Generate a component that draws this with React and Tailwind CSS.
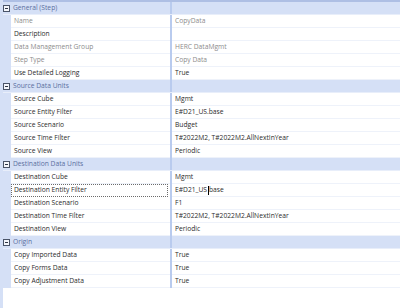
const sections = [
  {
    title: "General (Step)",
    rows: [
      { label: "Name", value: "CopyData", muted: true },
      { label: "Description", value: "" },
      { label: "Data Management Group", value: "HERC DataMgmt", muted: true },
      { label: "Step Type", value: "Copy Data", muted: true },
      { label: "Use Detailed Logging", value: "True" },
    ],
  },
  {
    title: "Source Data Units",
    rows: [
      { label: "Source Cube", value: "Mgmt" },
      { label: "Source Entity Filter", value: "E#D21_US.base" },
      { label: "Source Scenario", value: "Budget" },
      { label: "Source Time Filter", value: "T#2022M2, T#2022M2.AllNextInYear" },
      { label: "Source View", value: "Periodic" },
    ],
  },
  {
    title: "Destination Data Units",
    rows: [
      { label: "Destination Cube", value: "Mgmt" },
      { label: "Destination Entity Filter", value: "E#D21_US.base", focused: true },
      { label: "Destination Scenario", value: "F1" },
      { label: "Destination Time Filter", value: "T#2022M2, T#2022M2.AllNextInYear" },
      { label: "Destination View", value: "Periodic" },
    ],
  },
  {
    title: "Origin",
    rows: [
      { label: "Copy Imported Data", value: "True" },
      { label: "Copy Forms Data", value: "True" },
      { label: "Copy Adjustment Data", value: "True" },
    ],
  },
];

function CollapseIcon() {
  return (
    <svg width="7" height="7" viewBox="0 0 7 7" className="shrink-0">
      <rect x="0.5" y="0.5" width="6" height="6" fill="#f4f6fb" stroke="#4a5468" strokeWidth="1" />
      <rect x="2" y="3" width="3" height="1" fill="#2f3645" />
    </svg>
  );
}

function SectionHeader({ title }) {
  return (
    <div className="flex h-[13px] bg-[#d5e0f6] border-b border-[#e8eefa]">
      <div className="flex w-[8px] items-center justify-start">
        <CollapseIcon />
      </div>
      <div className="flex w-[159px] items-center pl-[2px] text-[#5a6fa0]">{title}</div>
      <div className="w-[2px] bg-[#b9cbee]" />
      <div className="flex-1" />
    </div>
  );
}

function PropertyRow({ row }) {
  const valueText = row.focused ? (
    <span className="flex items-center">
      E#D21_US<span className="mx-[0.5px] inline-block h-[9px] w-px bg-black" />base
    </span>
  ) : (
    row.value
  );

  return (
    <div className="flex h-[13px]">
      <div className="w-[8px] bg-[#d5e0f6]" />
      <div
        className={
          row.focused
            ? "flex w-[157px] items-center border border-dotted border-[#6b6b6b] pl-[2px] mr-[2px]"
            : "flex w-[159px] items-center border-b border-[#eef2fa] pl-[3px]"
        }
      >
        <span className={row.muted ? "text-[#8c8c8c]" : "text-[#2b2b2b]"}>{row.label}</span>
      </div>
      <div className="w-[2px] bg-[#b9cbee]" />
      <div
        className={
          "flex flex-1 items-center border-b border-[#eef2fa] pl-[3px] " +
          (row.muted ? "text-[#8c8c8c]" : "text-[#2b2b2b]")
        }
      >
        {valueText}
      </div>
    </div>
  );
}

export default function App() {
  return (
    <div
      className="h-[308px] w-[400px] overflow-hidden bg-white text-[6.7px] leading-none"
      style={{ fontFamily: '"Open Sans", "Liberation Sans", sans-serif' }}
    >
      <div className="flex h-full flex-col border-l-[3px] border-[#d5e0f6]">
        <div className="h-[2px] bg-[#aebfe4]" />
        {sections.map((section) => (
          <div key={section.title}>
            <SectionHeader title={section.title} />
            {section.rows.map((row) => (
              <PropertyRow key={row.label} row={row} />
            ))}
          </div>
        ))}
      </div>
    </div>
  );
}
